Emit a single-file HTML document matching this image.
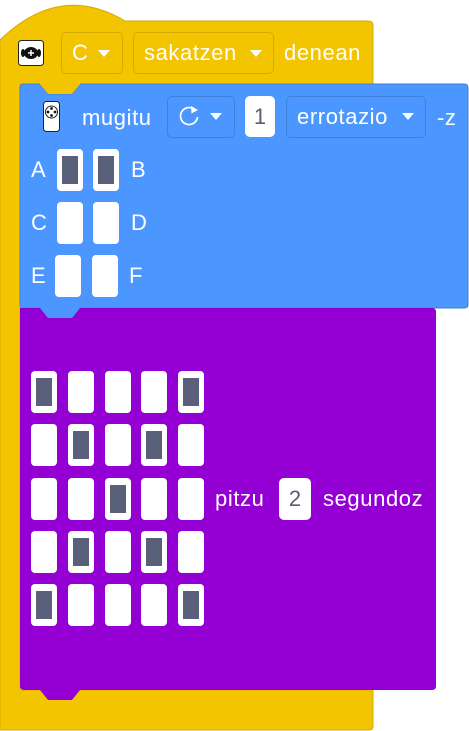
<!DOCTYPE html>
<html><head><meta charset="utf-8"><style>
html,body{margin:0;padding:0;background:#fff;width:469px;height:731px;overflow:hidden;position:relative;font-family:"Liberation Sans",sans-serif;}
.t{position:absolute;color:#fff;font-size:22px;letter-spacing:0.6px;line-height:24px;white-space:nowrap;}
.dd{position:absolute;border:1px solid rgba(0,0,0,0.15);border-radius:5px;box-sizing:border-box;}
.y{background:#f3c400;border-color:#d4a900;}
.b{background:#4c97ff;border-color:#3d7fd9;}
.arr{position:absolute;width:0;height:0;border-left:6px solid transparent;border-right:6px solid transparent;border-top:7px solid #fff;}
.fld{position:absolute;background:#fff;border-radius:5px;color:#575e75;font-size:22px;text-align:center;line-height:42px;}
.c{position:absolute;width:26px;height:42px;background:#fff;border-radius:4px;}
.c.on::after{content:"";position:absolute;left:5px;top:7px;width:16px;height:28px;background:#5b607a;}
</style></head><body>
<svg width="469" height="731" style="position:absolute;left:0;top:0">
<path d="M0 730 V40 Q60 -18 125 21 H368 Q373 21 373 26 V84 H20 V690 H373 V726 Q373 730 369 730 Z" fill="#f3c400" stroke="#d9ad00" stroke-width="1"/>
<path d="M20 88 Q20 84 24 84 H40 L48 94 H72 L80 84 H464 Q468 84 468 88 V305 Q468 308 464 308 H80 L72 318 H48 L40 308 H24 Q20 308 20 304 Z" fill="#4c97ff" stroke="#3d7fd9" stroke-width="1"/>
<path d="M39 83 L48 94 H72 L81 83 Z" fill="#f3c400"/>
<path d="M20 318 V308 H40 L48 318 H72 L80 308 H432 Q436 308 436 312 V686 Q436 690 432 690 H80 L72 700 H48 L40 690 H24 Q20 690 20 686 Z" fill="#9400d3"/>
<path d="M40 308 L48 318 H72 L80 308 Z" fill="#4c97ff"/>
<rect x="18.5" y="40.5" width="25" height="25" rx="3" fill="#fff" stroke="#222"/>
<ellipse cx="31" cy="53" rx="7" ry="6" fill="#111"/>
<ellipse cx="23" cy="53" rx="2" ry="4" fill="#111"/><ellipse cx="39" cy="53" rx="2" ry="4" fill="#111"/>
<path d="M31 50 V56 M28 53 H34" stroke="#fff" stroke-width="1.5"/>
<rect x="43.5" y="101.5" width="16" height="30" rx="3" fill="#fff" stroke="#222"/>
<circle cx="51.5" cy="112" r="6" fill="#fff" stroke="#222"/>
<circle cx="51.5" cy="108.5" r="1.4" fill="#111"/><circle cx="51.5" cy="115.5" r="1.4" fill="#111"/><circle cx="48" cy="112" r="1.4" fill="#111"/><circle cx="55" cy="112" r="1.4" fill="#111"/>
</svg>
<div class="dd y" style="left:61px;top:32px;width:62px;height:42px"></div>
<div class="t" style="left:72px;top:41px">C</div><div class="arr" style="left:98px;top:50px"></div>
<div class="dd y" style="left:133px;top:32px;width:141px;height:42px"></div>
<div class="t" style="left:144px;top:41px">sakatzen</div><div class="arr" style="left:250px;top:50px"></div>
<div class="t" style="left:284px;top:41px">denean</div>

<div class="t" style="left:82px;top:106px">mugitu</div>
<div class="dd b" style="left:167px;top:96px;width:68px;height:42px"></div>
<svg width="26" height="26" style="position:absolute;left:176px;top:103px"><path d="M19 7 A8.5 8.5 0 1 0 21.5 14" fill="none" stroke="#fff" stroke-width="1.7"/><path d="M15 3 L22 7 L15.5 10.5 Z" fill="#fff"/></svg>
<div class="arr" style="left:210px;top:113px"></div>
<div class="fld" style="left:245px;top:96px;width:30px;height:41px">1</div>
<div class="dd b" style="left:286px;top:96px;width:140px;height:42px"></div>
<div class="t" style="left:297px;top:105px">errotazio</div><div class="arr" style="left:402px;top:113px"></div>
<div class="t" style="left:437px;top:106px">-z</div>

<div class="t" style="left:31px;top:158px">A</div><div class="c on" style="left:57px;top:149px"></div><div class="c on" style="left:93px;top:149px"></div><div class="t" style="left:131px;top:158px">B</div>
<div class="t" style="left:31px;top:211px">C</div><div class="c" style="left:57px;top:202px"></div><div class="c" style="left:93px;top:202px"></div><div class="t" style="left:131px;top:211px">D</div>
<div class="t" style="left:31px;top:264px">E</div><div class="c" style="left:55px;top:255px"></div><div class="c" style="left:92px;top:255px"></div><div class="t" style="left:129px;top:264px">F</div>

<div class="c on" style="left:31px;top:371px"></div><div class="c" style="left:68px;top:371px"></div><div class="c" style="left:105px;top:371px"></div><div class="c" style="left:141px;top:371px"></div><div class="c on" style="left:178px;top:371px"></div>
<div class="c" style="left:31px;top:424px"></div><div class="c on" style="left:68px;top:424px"></div><div class="c" style="left:105px;top:424px"></div><div class="c on" style="left:141px;top:424px"></div><div class="c" style="left:178px;top:424px"></div>
<div class="c" style="left:31px;top:478px"></div><div class="c" style="left:68px;top:478px"></div><div class="c on" style="left:105px;top:478px"></div><div class="c" style="left:141px;top:478px"></div><div class="c" style="left:178px;top:478px"></div>
<div class="c" style="left:31px;top:531px"></div><div class="c on" style="left:68px;top:531px"></div><div class="c" style="left:105px;top:531px"></div><div class="c on" style="left:141px;top:531px"></div><div class="c" style="left:178px;top:531px"></div>
<div class="c on" style="left:31px;top:584px"></div><div class="c" style="left:68px;top:584px"></div><div class="c" style="left:105px;top:584px"></div><div class="c" style="left:141px;top:584px"></div><div class="c on" style="left:178px;top:584px"></div>

<div class="t" style="left:215px;top:487px">pitzu</div>
<div class="fld" style="left:279px;top:478px;width:32px;height:42px">2</div>
<div class="t" style="left:323px;top:487px">segundoz</div>
</body></html>
